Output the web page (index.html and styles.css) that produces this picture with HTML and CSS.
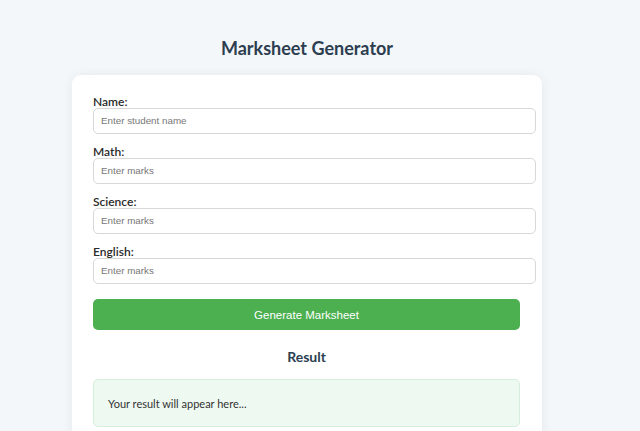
FILE: index.html
```html
<!DOCTYPE html>
<html>
<head>
<meta charset="utf-8">
<link rel="stylesheet" href="styles.css">
</head>
<body>
<main class="page">
  <h1 class="title">Marksheet Generator</h1>
  <section class="card">
    <div class="field">
      <label class="label">Name:</label>
      <input class="input" type="text" placeholder="Enter student name">
    </div>
    <div class="field">
      <label class="label">Math:</label>
      <input class="input" type="text" placeholder="Enter marks">
    </div>
    <div class="field">
      <label class="label">Science:</label>
      <input class="input" type="text" placeholder="Enter marks">
    </div>
    <div class="field">
      <label class="label">English:</label>
      <input class="input" type="text" placeholder="Enter marks">
    </div>
    <button class="btn">Generate Marksheet</button>
    <h2 class="result-title">Result</h2>
    <div class="result">Your result will appear here...</div>
  </section>
</main>
</body>
</html>
```
FILE: styles.css
```css
html, body {
  margin: 0;
  padding: 0;
  background: #f4f7fa;
  font-family: "Segoe UI", Lato, "Noto Sans", sans-serif;
  color: #2c3e50;
}
.page {
  display: flex;
  flex-direction: column;
  align-items: center;
  padding: 36px 26px 0 0;
}
.title {
  margin: 0 0 15px;
  font-size: 18px;
  line-height: 24px;
  font-weight: 700;
  color: #2c3e50;
}
.card {
  width: 427px;
  padding: 20px 22px 20px 21px;
  background: #fff;
  border-radius: 9px;
  box-shadow: 0 0 12px rgba(0, 0, 0, 0.06);
  display: flex;
  flex-direction: column;
}
.field {
  display: flex;
  flex-direction: column;
  margin-bottom: 11px;
}
.label {
  font-size: 12px;
  line-height: 13px;
  font-weight: 600;
  color: #2a2a2a;
}
.input {
  width: 100%;
  box-sizing: content-box;
  font-family: "Liberation Sans", Arial, sans-serif;
  font-size: 9.8px;
  line-height: 12px;
  padding: 6px 7px;
  border: 1px solid #d8d8d8;
  border-radius: 5px;
  color: #333;
  background: #fff;
  outline: none;
}
.input::placeholder {
  color: #777;
}
.btn {
  margin-top: 4px;
  height: 31px;
  width: 100%;
  border: none;
  border-radius: 5px;
  background: #4caf50;
  color: #fff;
  font-family: "Liberation Sans", Arial, sans-serif;
  font-size: 11.5px;
}
.result-title {
  margin: 18px 0 13px;
  text-align: center;
  font-size: 14px;
  line-height: 18px;
  font-weight: 700;
  color: #2c3e50;
}
.result {
  height: 46px;
  display: flex;
  align-items: center;
  padding: 0 14px;
  background: #eef9f1;
  border: 1px solid #d6efdc;
  border-radius: 5px;
  font-size: 11px;
  color: #333;
}
```
